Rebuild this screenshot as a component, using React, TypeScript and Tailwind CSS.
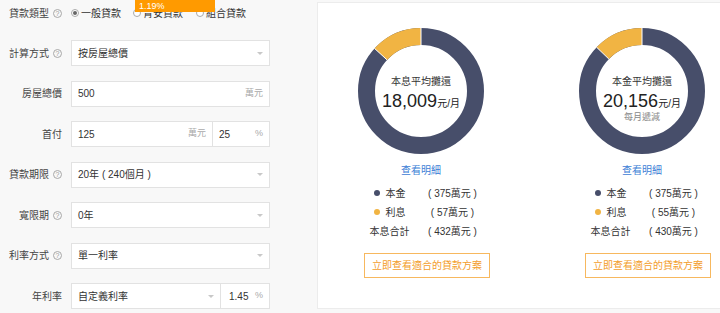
import React from "react";

const FONT = { fontFamily: '"Liberation Sans", "Noto Sans CJK TC", sans-serif' };

function Help() {
  return (
    <span className="inline-flex w-[9px] h-[9px] rounded-full border border-[#a8a8a8] items-center justify-center text-[7px] leading-none text-[#999]">
      ?
    </span>
  );
}

function Caret() {
  return <span className="w-0 h-0 border-l-[3px] border-r-[3px] border-t-[3px] border-l-transparent border-r-transparent border-t-[#c8c8c8]" />;
}

function Label({ text, help }: { text: string; help?: boolean }) {
  return (
    <div className="w-[62px] flex justify-end items-center gap-[4px] text-[10px] text-[#444] whitespace-nowrap">
      <span>{text}</span>
      {help && <Help />}
    </div>
  );
}

function Select({ value, w = "w-[199px]", border = "border" }: { value: string; w?: string; border?: string }) {
  return (
    <div className={`${w} h-[26px] bg-white ${border} border-[#e2e2e2] flex items-center justify-between pl-[6px] pr-[6px] text-[10px] text-[#333] whitespace-pre`}>
      <span>{value}</span>
      <Caret />
    </div>
  );
}

function Row({ children }: { children: React.ReactNode }) {
  return <div className="flex items-center h-[26px] gap-[9px]">{children}</div>;
}

function Radio({ checked }: { checked?: boolean }) {
  return (
    <span className="w-[8px] h-[8px] rounded-full border border-[#aaa] bg-white flex items-center justify-center">
      {checked && <span className="w-[4px] h-[4px] rounded-full bg-[#666]" />}
    </span>
  );
}

function Donut({ frac }: { frac: number }) {
  const r = 54.5;
  const th = -frac * 2 * Math.PI;
  const x = 63 + r * Math.sin(th);
  const y = 63 - r * Math.cos(th);
  const ix = 63 + 46 * Math.sin(th);
  const iy = 63 - 46 * Math.cos(th);
  const ox = 63 + 63 * Math.sin(th);
  const oy = 63 - 63 * Math.cos(th);
  return (
    <svg width="126" height="126" viewBox="0 0 126 126">
      <circle cx="63" cy="63" r={r} fill="none" stroke="#474e6a" strokeWidth="17" />
      <path d={`M ${x} ${y} A ${r} ${r} 0 0 1 63 ${63 - r}`} fill="none" stroke="#f1b443" strokeWidth="17" />
      <line x1="63" y1="0" x2="63" y2="17" stroke="#fff" strokeWidth="1" />
      <line x1={ix} y1={iy} x2={ox} y2={oy} stroke="#fff" strokeWidth="1" />
    </svg>
  );
}

function Column({
  frac,
  title,
  amount,
  sub,
  principal,
  interest,
  total,
}: {
  frac: number;
  title: string;
  amount: string;
  sub?: string;
  principal: string;
  interest: string;
  total: string;
}) {
  return (
    <div className="w-[206px] shrink-0 flex flex-col items-center">
      <div className="relative w-[126px] h-[126px]">
        <Donut frac={frac} />
        <div className="absolute inset-x-0 top-[46.7px] flex flex-col items-center">
          <div className="text-[10px] leading-[14px] text-[#333]">{title}</div>
          <div className="mt-[2px] h-[20px] leading-[20px] text-[#222] whitespace-nowrap">
            <span className="text-[18px]">{amount}</span>
            <span className="text-[10px]">元/月</span>
          </div>
          {sub && <div className="text-[9px] leading-[12px] text-[#888]">{sub}</div>}
        </div>
      </div>
      <div className="mt-[10px] text-[10px] leading-[14px] text-[#3d80d6]">查看明細</div>
      <div className="mt-[5.5px] grid grid-cols-[63px_63px] text-[10px] leading-[19px] text-[#333] text-center">
        <div className="flex items-center justify-center gap-[6px]">
          <span className="w-[6px] h-[6px] rounded-full bg-[#474e6a]" />
          <span className="w-[20px] text-left">本金</span>
        </div>
        <div className="whitespace-nowrap">( {principal}萬元 )</div>
        <div className="flex items-center justify-center gap-[6px]">
          <span className="w-[6px] h-[6px] rounded-full bg-[#f1b443]" />
          <span className="w-[20px] text-left">利息</span>
        </div>
        <div className="whitespace-nowrap">( {interest}萬元 )</div>
        <div>本息合計</div>
        <div className="whitespace-nowrap">( {total}萬元 )</div>
      </div>
      <div className="mt-[12px] ml-[12px] w-[126px] h-[25.5px] border border-[#f7b85e] flex items-center justify-center text-[10px] text-[#f39d2c]">
        立即查看適合的貸款方案
      </div>
    </div>
  );
}

export default function App() {
  return (
    <div className="relative w-[720px] h-[313px] overflow-hidden bg-[#f8f8f8] flex" style={FONT}>
      <div className="w-[317px] shrink-0 flex flex-col gap-[14.5px]">
        <div className="flex items-center h-[26px] gap-[9px] -mb-[0.5px]">
          <Label text="貸款類型" help />
          <div className="flex items-center text-[10px] text-[#333]">
            <Radio checked />
            <span className="ml-[2px]">一般貸款</span>
            <span className="ml-[12px]" />
            <Radio />
            <span className="ml-[2px]">青安貸款</span>
            <span className="ml-[13px]" />
            <Radio />
            <span className="ml-[2px]">組合貸款</span>
          </div>
        </div>
        <Row>
          <Label text="計算方式" help />
          <Select value="按房屋總價" />
        </Row>
        <Row>
          <Label text="房屋總價" />
          <div className="w-[199px] h-[26px] bg-white border border-[#e2e2e2] flex items-center justify-between px-[6px] text-[10px] text-[#333]">
            <span>500</span>
            <span className="text-[9px] text-[#aaa]">萬元</span>
          </div>
        </Row>
        <Row>
          <Label text="首付" />
          <div className="w-[199px] h-[26px] flex">
            <div className="w-[142px] h-full bg-white border border-[#e2e2e2] flex items-center justify-between px-[6px] text-[10px] text-[#333]">
              <span>125</span>
              <span className="text-[9px] text-[#aaa]">萬元</span>
            </div>
            <div className="flex-1 h-full bg-white border border-l-0 border-[#e2e2e2] flex items-center justify-between px-[6px] text-[10px] text-[#333]">
              <span>25</span>
              <span className="text-[9px] text-[#aaa]">%</span>
            </div>
          </div>
        </Row>
        <Row>
          <Label text="貸款期限" help />
          <Select value="20年 ( 240個月 )" />
        </Row>
        <Row>
          <Label text="寬限期" help />
          <Select value="0年" />
        </Row>
        <Row>
          <Label text="利率方式" help />
          <Select value="單一利率" />
        </Row>
        <Row>
          <Label text="年利率" />
          <div className="w-[199px] h-[26px] flex">
            <Select value="自定義利率" w="w-[150px]" />
            <div className="flex-1 h-full bg-white border border-l-0 border-[#e2e2e2] flex items-center justify-between pl-[8px] pr-[6px] text-[10px] text-[#333]">
              <span>1.45</span>
              <span className="text-[9px] text-[#aaa]">%</span>
            </div>
          </div>
        </Row>
      </div>

      <div className="mt-[2px] h-[307px] w-[440px] shrink-0 bg-white border border-[#ececec] pt-[25px] flex gap-[15px]">
        <Column frac={57 / 432} title="本息平均攤還" amount="18,009" principal="375" interest="57" total="432" />
        <Column frac={55 / 430} title="本金平均攤還" amount="20,156" sub="每月遞減" principal="375" interest="55" total="430" />
      </div>

      <div className="absolute left-[135px] top-0 w-[80px] h-[12px] bg-[#ff9a00] text-white text-[9px] leading-[12px] pl-[4px]">
        1.19%
      </div>
    </div>
  );
}
